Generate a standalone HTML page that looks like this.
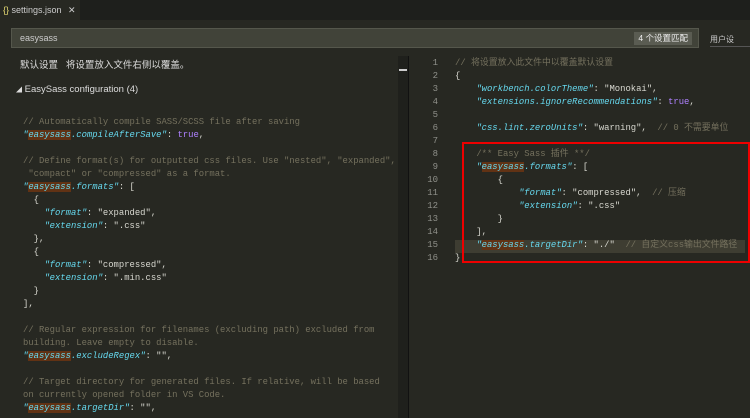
<!DOCTYPE html>
<html><head><meta charset="utf-8"><style>
body{margin:0;width:750px;height:418px;overflow:hidden;background:#272822;font-family:"Liberation Sans","Noto Sans CJK SC",sans-serif;position:relative}
.tabbar{position:absolute;left:0;top:0;width:750px;height:20px;background:#1e1f1c}
.tab{position:absolute;left:0;top:0;width:80px;height:20px;background:#272822;color:#ccc;font-size:9px;line-height:20px}
.search{position:absolute;left:11px;top:28px;width:688px;height:20px;background:#414339;border:1px solid #55574c;box-sizing:border-box;color:#ccc;font-size:9px;line-height:18px;padding-left:8px}
.badge{position:absolute;right:6px;top:3px;height:13px;line-height:13px;background:#5a5c52;color:#eee;font-size:8.5px;padding:0 4px}
.l,.r{position:absolute;font-family:"Liberation Mono","Noto Sans CJK SC",monospace;font-size:8.9px;white-space:pre;color:#d8d8d0;line-height:13px}
.c{color:#75715e}.k{color:#66d9ef;font-style:italic}.t{color:#ae81ff}.h{background:#613214}
.n{position:absolute;left:420px;width:18px;text-align:right;font-family:"Liberation Mono",monospace;font-size:9px;color:#8f908a;line-height:13px}
</style></head><body>
<div class="tabbar"><div class="tab"><span style="color:#e6db74;margin-left:3px">{}</span> settings.json <span style="margin-left:4px">✕</span></div></div>
<div class="search">easysass<div class="badge">4 个设置匹配</div></div>
<div style="position:absolute;left:710px;top:34px;color:#ccc;font-size:8px">用户设</div>
<div style="position:absolute;left:710px;top:46px;width:40px;height:1px;background:#555"></div>
<div style="position:absolute;left:20px;top:57px;color:#ddd;font-size:9.5px">默认设置 &nbsp; 将设置放入文件右侧以覆盖。</div>
<div style="position:absolute;left:16px;top:84px;color:#ddd;font-size:9.5px"><span style="font-size:6px">◢</span> EasySass configuration (4)</div>
<div style="position:absolute;left:398px;top:56px;width:10px;height:362px;background:#1f201c"></div>
<div style="position:absolute;left:399px;top:69px;width:8px;height:2px;background:#ccc"></div>
<div style="position:absolute;left:408px;top:56px;width:1px;height:362px;background:#111"></div>
<div class="l" style="left:23px;top:116px"><span class="c">// Automatically compile SASS/SCSS file after saving</span>
<span class="k">"<span class="h">easysass</span>.compileAfterSave"</span>: <span class="t">true</span>,

<span class="c">// Define format(s) for outputted css files. Use "nested", "expanded",</span>
<span class="c"> "compact" or "compressed" as a format.</span>
<span class="k">"<span class="h">easysass</span>.formats"</span>: [
  {
    <span class="k">"format"</span>: "expanded",
    <span class="k">"extension"</span>: ".css"
  },
  {
    <span class="k">"format"</span>: "compressed",
    <span class="k">"extension"</span>: ".min.css"
  }
],

<span class="c">// Regular expression for filenames (excluding path) excluded from</span>
<span class="c">building. Leave empty to disable.</span>
<span class="k">"<span class="h">easysass</span>.excludeRegex"</span>: "",

<span class="c">// Target directory for generated files. If relative, will be based</span>
<span class="c">on currently opened folder in VS Code.</span>
<span class="k">"<span class="h">easysass</span>.targetDir"</span>: "",</div>
<div style="position:absolute;left:455px;top:240px;width:290px;height:13px;background:#3e3d32"></div>
<div class="n" style="top:57px">1<br>2<br>3<br>4<br>5<br>6<br>7<br>8<br>9<br>10<br>11<br>12<br>13<br>14<br>15<br>16</div>
<div class="r" style="left:455px;top:57px"><span class="c">// 将设置放入此文件中以覆盖默认设置</span>
{
    <span class="k">"workbench.colorTheme"</span>: "Monokai",
    <span class="k">"extensions.ignoreRecommendations"</span>: <span class="t">true</span>,

    <span class="k">"css.lint.zeroUnits"</span>: "warning",  <span class="c">// 0 不需要单位</span>

    <span class="c">/** Easy Sass 插件 **/</span>
    <span class="k">"<span class="h">easysass</span>.formats"</span>: [
        {
            <span class="k">"format"</span>: "compressed",  <span class="c">// 压缩</span>
            <span class="k">"extension"</span>: ".css"
        }
    ],
    <span class="k">"<span class="h">easysass</span>.targetDir"</span>: "./"  <span class="c">// 自定义css输出文件路径</span>
}</div>
<div style="position:absolute;left:462px;top:142px;width:288px;height:121px;border:2px solid #e00;box-sizing:border-box"></div>
</body></html>
